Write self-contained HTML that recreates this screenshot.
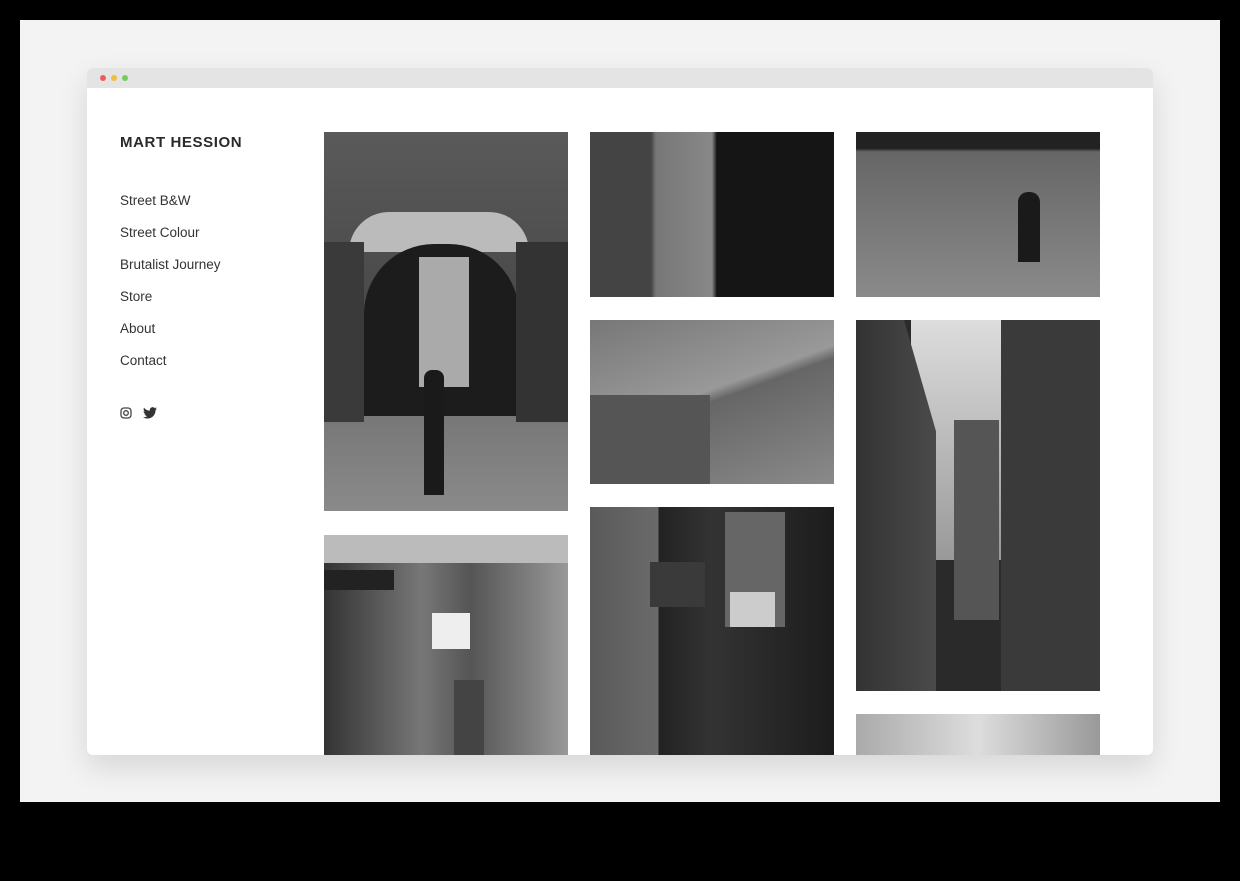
<!DOCTYPE html>
<html><head><meta charset="utf-8"><style>
*{margin:0;padding:0;box-sizing:border-box}
body{width:1240px;height:881px;background:#000;position:relative;overflow:hidden;font-family:"Liberation Sans",sans-serif}
.bg{position:absolute;left:20px;top:20px;width:1200px;height:782px;background:#f3f3f3}
.win{position:absolute;left:87px;top:68px;width:1066px;height:687px;background:#fff;border-radius:6px;overflow:hidden;box-shadow:0 12px 30px rgba(0,0,0,.12)}
.bar{height:20px;background:#e4e4e4}
.dot{position:absolute;top:7px;width:6px;height:6px;border-radius:50%}
.p{position:absolute;overflow:hidden}
.logo{position:absolute;left:33px;top:66px;font-size:15px;font-weight:bold;letter-spacing:0.6px;color:#2a2a2a}
.nav{position:absolute;left:33px;font-size:13.5px;color:#333}
</style></head><body>
<div class="bg"></div>
<div class="win">
<div class="bar"></div>
<div class="dot" style="left:13px;background:#ee5d5d"></div>
<div class="dot" style="left:24px;background:#f0c03a"></div>
<div class="dot" style="left:35px;background:#7bc95a"></div>
<div class="logo">MART HESSION</div>
<div class="nav" style="top:125px">Street B&amp;W</div>
<div class="nav" style="top:157px">Street Colour</div>
<div class="nav" style="top:189px">Brutalist Journey</div>
<div class="nav" style="top:221px">Store</div>
<div class="nav" style="top:253px">About</div>
<div class="nav" style="top:285px">Contact</div>
<svg style="position:absolute;left:33px;top:339px" width="12" height="12" viewBox="0 0 12 12"><rect x="1" y="1" width="10" height="10" rx="3" fill="none" stroke="#444" stroke-width="1.3"/><circle cx="6" cy="6" r="2.3" fill="none" stroke="#444" stroke-width="1.3"/></svg>
<svg style="position:absolute;left:56px;top:339px" width="14" height="12" viewBox="0 0 24 20"><path d="M24 2.4a10 10 0 0 1-2.8.8A5 5 0 0 0 23.3.4a10 10 0 0 1-3.1 1.2A4.9 4.9 0 0 0 11.8 6 14 14 0 0 1 1.7.9a4.9 4.9 0 0 0 1.5 6.6A4.9 4.9 0 0 1 1 6.9a4.9 4.9 0 0 0 3.9 4.8 5 5 0 0 1-2.2.1 4.9 4.9 0 0 0 4.6 3.4A9.9 9.9 0 0 1 0 17.3 14 14 0 0 0 7.5 19.5c9.1 0 14-7.5 14-14v-.6A10 10 0 0 0 24 2.4z" fill="#333"/></svg>

<div class="p" style="left:237px;top:64px;width:244px;height:379px;background:linear-gradient(#5a5a5a,#444 60%,#777 75%,#8a8a8a)">
 <div style="position:absolute;left:25px;top:80px;width:180px;height:40px;border-radius:90px 90px 0 0;background:#bbb"></div>
 <div style="position:absolute;left:40px;top:112px;width:155px;height:172px;border-radius:70px 70px 0 0;background:#1c1c1c"></div>
 <div style="position:absolute;left:95px;top:125px;width:50px;height:130px;background:#aaa"></div>
 <div style="position:absolute;left:0;top:110px;width:40px;height:180px;background:#3a3a3a"></div>
 <div style="position:absolute;left:192px;top:110px;width:52px;height:180px;background:#333"></div>
 <div style="position:absolute;left:100px;top:238px;width:20px;height:125px;background:#1a1a1a;border-radius:8px 8px 0 0"></div>
</div>
<div class="p" style="left:237px;top:467px;width:244px;height:230px;background:linear-gradient(90deg,#333,#777 40%,#555 60%,#999)">
 <div style="position:absolute;left:0;top:0;width:244px;height:28px;background:#bbb"></div>
 <div style="position:absolute;left:0;top:35px;width:70px;height:20px;background:#222"></div>
 <div style="position:absolute;left:108px;top:78px;width:38px;height:36px;background:#eee"></div>
 <div style="position:absolute;left:130px;top:145px;width:30px;height:75px;background:#444"></div>
</div>
<div class="p" style="left:503px;top:64px;width:244px;height:165px;background:linear-gradient(90deg,#444 0,#444 25%,#777 27%,#888 50%,#151515 52%)"></div>
<div class="p" style="left:503px;top:252px;width:244px;height:164px;background:linear-gradient(160deg,#777,#999 45%,#666 50%,#8a8a8a)">
 <div style="position:absolute;left:0;top:75px;width:120px;height:89px;background:#555"></div>
</div>
<div class="p" style="left:503px;top:439px;width:244px;height:248px;background:linear-gradient(90deg,#5a5a5a 0,#6a6a6a 28%,#222 28%,#333 50%,#1c1c1c 100%)">
 <div style="position:absolute;left:135px;top:5px;width:60px;height:115px;background:#666"></div>
 <div style="position:absolute;left:60px;top:55px;width:55px;height:45px;background:#3a3a3a"></div>
 <div style="position:absolute;left:140px;top:85px;width:45px;height:35px;background:#ccc"></div>
</div>
<div class="p" style="left:769px;top:64px;width:244px;height:165px;background:linear-gradient(#222 0,#222 10%,#666 12%,#8a8a8a)">
 <div style="position:absolute;left:162px;top:60px;width:22px;height:70px;background:#1a1a1a;border-radius:10px 10px 0 0"></div>
</div>
<div class="p" style="left:769px;top:252px;width:244px;height:371px;background:#2a2a2a">
 <div style="position:absolute;left:55px;top:0;width:90px;height:240px;background:linear-gradient(#ddd,#999)"></div>
 <div style="position:absolute;left:98px;top:100px;width:45px;height:200px;background:#555"></div>
 <div style="position:absolute;left:0;top:0;width:80px;height:371px;background:linear-gradient(90deg,#333,#4a4a4a);clip-path:polygon(0 0,60% 0,100% 30%,100% 100%,0 100%)"></div>
 <div style="position:absolute;left:145px;top:0;width:99px;height:371px;background:#3a3a3a"></div>
</div>
<div class="p" style="left:769px;top:646px;width:244px;height:41px;background:linear-gradient(90deg,#aaa,#ddd 50%,#999)"></div>
</div>
</body></html>
